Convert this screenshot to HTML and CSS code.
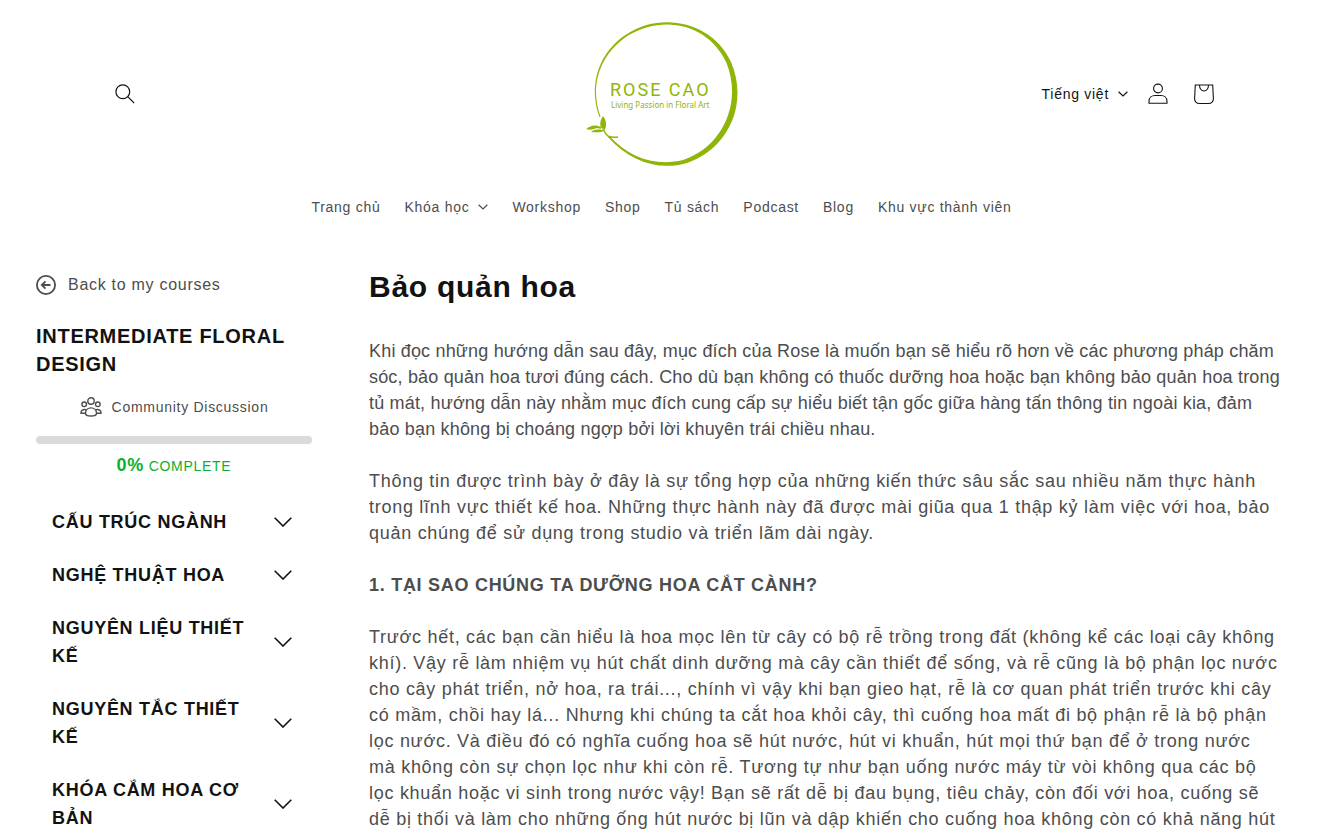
FILE: index.html
```html
<!DOCTYPE html>
<html lang="vi">
<head>
<meta charset="utf-8">
<meta name="viewport" content="width=device-width, initial-scale=1">
<title>Bảo quản hoa – Rose Cao</title>
<link rel="stylesheet" href="styles.css">
</head>
<body>
<header class="header">
  <div class="header-top">
    <button class="icon-button search" aria-label="Tìm kiếm">
      <svg width="20" height="20" viewBox="0 0 20 20" fill="none" stroke="currentColor" stroke-width="1.2"><circle cx="7.8" cy="7.8" r="6.9"/><path d="M12.7 12.7 19.2 19.2"/></svg>
    </button>
    <a class="logo" href="#" aria-label="Rose Cao">
      <svg width="159" height="148" viewBox="580 20 159 148" fill="#8fb508">
        <path d="M599.5 117C588 87 598 52 627 34C663 11 713 23 731 62C749 104 728 149 687 163C659 171 630 162 608 137L609.5 136C629 158 656 166.500 683 160C721 148 743 104 726.500 63C710 26 666 13 628 35.500C600 54 589 86 600.500 116.500Z"/>
        <path d="M603 116.200C599.500 121 599 127 603.500 131.500C607.500 127 606.500 120 603 116.200ZM586.200 129C592 123.500 600 124.500 604.500 130.500C600 128 598 127.500 592 129.500Q589 130 586.200 129ZM591 132C595 129 600 129 604 131C600 133 596 132 591 132Z"/>
        <path d="M603.500 130C605 133 607 135.500 610 138M608.500 136.300C611 137.300 614 137.600 618 137" fill="none" stroke="#8fb508" stroke-width="1.500"/>
        <text class="logo-name" x="610" y="96">ROSE CAO</text>
        <text class="logo-tag" x="611" y="108">Living Passion in Floral Art</text>
      </svg>
    </a>
    <div class="header-tools">
      <button class="language">Tiếng việt
        <svg width="10" height="6" viewBox="0 0 10 6" fill="none" stroke="currentColor" stroke-width="1.200"><path d="M.6.7 5 5 9.400.7"/></svg>
      </button>
      <a class="icon-button" href="#" aria-label="Đăng nhập">
        <svg width="20" height="22" viewBox="0 0 20 22" fill="none" stroke="currentColor" stroke-width="1.100"><circle cx="10" cy="5.500" r="4.400"/><path d="M1 20.300V18.500C1 14.500 4 12.500 7 12.500H13C16 12.500 19 14.500 19 18.500V20.300Z"/></svg>
      </a>
      <a class="icon-button" href="#" aria-label="Giỏ hàng">
        <svg width="22" height="22" viewBox="0 0 22 22" fill="none" stroke="currentColor" stroke-width="1.100"><path d="M2.300 2H19.700L20.400 15.500C20.500 18.500 18.500 20.500 15.500 20.500H6.500C3.500 20.500 1.500 18.500 1.600 15.500ZM6.500 2C6.500 10 15.500 10 15.500 2"/></svg>
      </a>
    </div>
  </div>
  <nav class="nav">
    <a href="#">Trang chủ</a>
    <a href="#">Khóa học
      <svg width="10" height="6" viewBox="0 0 10 6" fill="none" stroke="currentColor" stroke-width="1.200"><path d="M.6.7 5 5 9.400.7"/></svg></a>
    <a href="#">Workshop</a>
    <a href="#">Shop</a>
    <a href="#">Tủ sách</a>
    <a href="#">Podcast</a>
    <a href="#">Blog</a>
    <a href="#">Khu vực thành viên</a>
  </nav>
</header>
<div class="course">
  <aside class="sidebar">
    <a class="back" href="#">
      <svg width="20" height="20" viewBox="0 0 20 20" fill="none" stroke="currentColor" stroke-width="1.800"><circle cx="10" cy="10" r="9.100"/><path d="M14.500 10H6.300M9.500 6.300 5.800 10 9.500 13.700"/></svg>
      Back to my courses</a>
    <h2 class="course-title">INTERMEDIATE FLORAL DESIGN</h2>
    <a class="community" href="#">
      <svg width="22" height="20" viewBox="0 0 22 20" fill="none" stroke="currentColor" stroke-width="1.400"><circle cx="11" cy="4" r="3.200"/><circle cx="4.200" cy="7.300" r="2.300"/><circle cx="17.800" cy="7.300" r="2.300"/><path d="M5.500 16.500C5.500 9 16.500 9 16.500 16.500C16.500 19.800 5.500 19.800 5.500 16.500ZM5.500 16.200H1C.8 13.500 3 12 6 12.600M16.500 16.200H21C21.200 13.500 19 12 16 12.600"/></svg>
      Community Discussion</a>
    <div class="progress" role="progressbar" aria-label="Course progress" aria-valuenow="0"></div>
    <p class="complete"><strong>0%</strong> COMPLETE</p>
    <div class="chapters">
      <button class="chapter"><span>CẤU TRÚC NGÀNH</span><svg width="18" height="10" viewBox="0 0 18 10"><path d="M.7.7 9 9 17.300.7"/></svg></button>
      <button class="chapter"><span>NGHỆ THUẬT HOA</span><svg width="18" height="10" viewBox="0 0 18 10"><path d="M.7.7 9 9 17.300.7"/></svg></button>
      <button class="chapter"><span>NGUYÊN LIỆU THIẾT KẾ</span><svg width="18" height="10" viewBox="0 0 18 10"><path d="M.7.7 9 9 17.300.7"/></svg></button>
      <button class="chapter"><span>NGUYÊN TẮC THIẾT KẾ</span><svg width="18" height="10" viewBox="0 0 18 10"><path d="M.7.7 9 9 17.300.7"/></svg></button>
      <button class="chapter"><span>KHÓA CẮM HOA CƠ BẢN</span><svg width="18" height="10" viewBox="0 0 18 10"><path d="M.7.7 9 9 17.300.7"/></svg></button>
    </div>
  </aside>
  <main class="lesson">
    <h1>Bảo quản hoa</h1>
    <p class="intro">Khi đọc những hướng dẫn sau đây, mục đích của Rose là muốn bạn sẽ hiểu rõ hơn về các phương pháp chăm sóc, bảo quản hoa tươi đúng cách. Cho dù bạn không có thuốc dưỡng hoa hoặc bạn không bảo quản hoa trong tủ mát, hướng dẫn này nhằm mục đích cung cấp sự hiểu biết tận gốc giữa hàng tấn thông tin ngoài kia, đảm bảo bạn không bị choáng ngợp bởi lời khuyên trái chiều nhau.</p>
    <p>Thông tin được trình bày ở đây là sự tổng hợp của những kiến thức sâu sắc sau nhiều năm thực hành trong lĩnh vực thiết kế hoa. Những thực hành này đã được mài giũa qua 1 thập kỷ làm việc với hoa, bảo quản chúng để sử dụng trong studio và triển lãm dài ngày.</p>
    <p><strong>1. TẠI SAO CHÚNG TA DƯỠNG HOA CẮT CÀNH?</strong></p>
    <p>Trước hết, các bạn cần hiểu là hoa mọc lên từ cây có bộ rễ trồng trong đất (không kể các loại cây không khí). Vậy rễ làm nhiệm vụ hút chất dinh dưỡng mà cây cần thiết để sống, và rễ cũng là bộ phận lọc nước cho cây phát triển, nở hoa, ra trái..., chính vì vậy khi bạn gieo hạt, rễ là cơ quan phát triển trước khi cây có mầm, chồi hay lá... Nhưng khi chúng ta cắt hoa khỏi cây, thì cuống hoa mất đi bộ phận rễ là bộ phận lọc nước. Và điều đó có nghĩa cuống hoa sẽ hút nước, hút vi khuẩn, hút mọi thứ bạn để ở trong nước mà không còn sự chọn lọc như khi còn rễ. Tương tự như bạn uống nước máy từ vòi không qua các bộ lọc khuẩn hoặc vi sinh trong nước vậy! Bạn sẽ rất dễ bị đau bụng, tiêu chảy, còn đối với hoa, cuống sẽ dễ bị thối và làm cho những ống hút nước bị lũn và dập khiến cho cuống hoa không còn có khả năng hút</p>
  </main>
</div>
</body>
</html>
```
FILE: styles.css
```css
* { box-sizing: border-box; }
html { overflow-x: hidden; scrollbar-width: none; }
body {
  margin: 0;
  background: #fff;
  color: #4d4d4d;
  font-family: "Liberation Sans", Arial, sans-serif;
  font-size: 18px;
  line-height: 26px;
  letter-spacing: 0.04em;
}
a { color: inherit; text-decoration: none; }
button { border: 0; padding: 0; background: none; color: inherit; font: inherit; letter-spacing: inherit; }
svg { display: block; flex: none; }
h1, h2, p { margin: 0; }

.header { padding-top: 20px; color: #121212; }
.header-top {
  display: grid;
  grid-template-columns: 1fr auto 1fr;
  align-items: center;
  padding: 0 93px;
}
.search { margin-left: 10px; }
.icon-button { display: grid; place-items: center; width: 44px; height: 44px; }
.header-tools { display: flex; justify-content: flex-end; align-items: center; gap: 2px; }
.language { display: flex; align-items: center; gap: 9px; padding-right: 6px; font-size: 14px; }
.logo-name { font-family: Roboto, sans-serif; font-size: 18px; letter-spacing: 2px; }
.logo-tag { font-family: "Noto Sans", sans-serif; font-size: 8px; letter-spacing: 0; }
.nav {
  display: flex;
  justify-content: center;
  gap: 24px;
  padding: 26px 0 0 4px;
  color: #4d4d4d;
  font-size: 14px;
}
.nav a { display: flex; align-items: center; gap: 9px; }

.course {
  display: grid;
  grid-template-columns: 276px 1fr;
  column-gap: 57px;
  padding: 52px 38px 0 36px;
}
.back { display: flex; align-items: center; gap: 12px; font-size: 16px; }
.course-title { margin-top: 24px; color: #121212; font-size: 20px; line-height: 28px; }
.community { display: flex; justify-content: center; align-items: center; gap: 10px; margin-top: 16px; font-size: 14px; }
.progress { height: 8px; margin-top: 16px; border-radius: 4px; background: #d9dadb; }
.complete { margin-top: 8px; color: #0bb12c; text-align: center; font-size: 14px; }
.complete strong { font-size: 18px; }
.chapters { display: grid; gap: 1px; margin-top: 17px; }
.chapter {
  display: flex;
  justify-content: space-between;
  align-items: center;
  gap: 24px;
  padding: 12px 20px 12px 16px;
  color: #121212;
  font-size: 18px;
  font-weight: bold;
  line-height: 28px;
  text-align: left;
}
.chapter svg { fill: none; stroke: currentColor; stroke-width: 1.6; }
.lesson h1 { color: #121212; font-size: 30px; line-height: 30px; }
.lesson p { margin-top: 26px; }
.lesson .intro { margin-top: 36px; letter-spacing: 0.01em; }
```
